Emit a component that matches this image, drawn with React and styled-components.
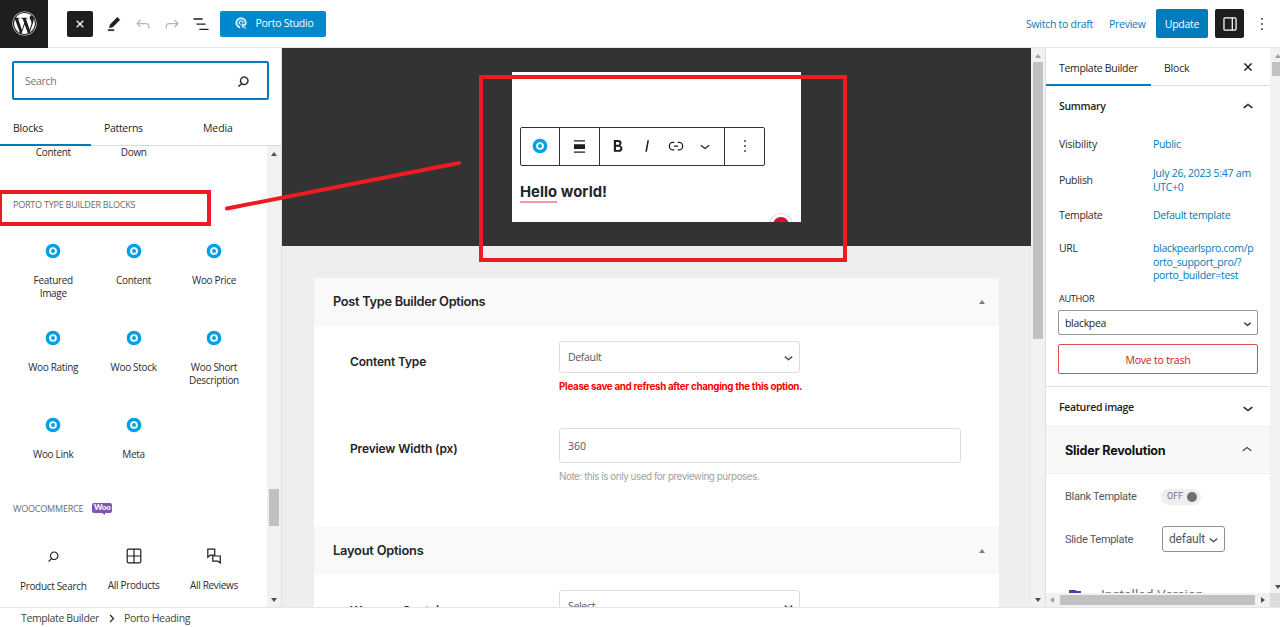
import React from "react";
import styled, { createGlobalStyle, css } from "styled-components";
import { FaWordpress } from "react-icons/fa";

const Global = createGlobalStyle`
  * { box-sizing: border-box; }
  body { margin: 0; overflow: hidden; background: #fff; color: #1e1e1e; letter-spacing: -0.32px;
    font-family: "Open Sans", "Noto Sans", sans-serif; font-size: 10.5px; line-height: 13px; }
`;
const heading = css`
  font-family: Inter, "Liberation Sans", sans-serif;
`;

const Page = styled.div`
  position: relative;
  width: 1280px;
  height: 627px;
  overflow: hidden;
  display: flex;
  flex-direction: column;
`;
const T = styled.span`
  white-space: nowrap;
  letter-spacing: ${(p) => (p.$ls === undefined ? "inherit" : `${p.$ls}px`)};
`;

/* ---------- icons ---------- */
const paths = {
  edit: "m19 7-3-3-8.5 8.5-1 4 4-1L19 7Zm-7 11.5H5V20h7v-1.5Z",
  undo: "M18.3 11.7c-.6-.6-1.4-.9-2.3-.9H6.7l2.9-3.3-1.1-1-4.5 5L8.5 16l1-1-2.7-2.7H16c.5 0 .9.2 1.3.5 1 1 1 3.4 1 4.5v.3h1.5v-.2c0-1.5 0-4.3-1.5-5.7z",
  redo: "M15.6 6.5l-1.1 1 2.9 3.3H8c-.9 0-1.7.3-2.3.9-1.4 1.5-1.4 4.2-1.4 5.6v.2h1.5v-.3c0-1.1 0-3.5 1-4.5.3-.3.7-.5 1.3-.5h9.2L14.5 15l1.1 1.1 4.6-4.6-4.6-5z",
  list: "M3 5.1h11V6.8H3V5.1Zm3.5 6.2h11V13h-11v-1.7ZM21 17.6H10v1.7h11V17.6Z",
  close: "M12 13.06l3.712 3.713 1.061-1.06L13.061 12l3.712-3.712-1.06-1.06L12 10.938 8.288 7.227l-1.061 1.06L10.939 12l-3.712 3.712 1.06 1.061L12 13.061z",
  search: "M13 5c-3.3 0-6 2.7-6 6 0 1.4.5 2.7 1.3 3.7l-3.8 3.8 1.1 1.1 3.8-3.8c1 .8 2.3 1.3 3.7 1.3 3.3 0 6-2.7 6-6S16.3 5 13 5zm0 10.5c-2.5 0-4.5-2-4.5-4.5s2-4.5 4.5-4.5 4.5 2 4.5 4.5-2 4.5-4.5 4.5z",
  bold: "M14.7 11.3c1-.6 1.5-1.6 1.5-3 0-2.3-1.3-3.4-4-3.4H7v14h5.8c1.4 0 2.5-.3 3.3-1 .8-.7 1.2-1.7 1.2-2.9.1-1.9-.8-3.1-2.6-3.7zm-5.1-4h2.3c.6 0 1.1.1 1.4.4.3.3.5.7.5 1.2s-.2 1-.5 1.2c-.3.3-.8.4-1.4.4H9.6V7.3zm4.6 9c-.4.3-1 .4-1.7.4H9.6v-3.9h2.9c.7 0 1.3.2 1.7.5.4.3.6.8.6 1.5s-.2 1.2-.6 1.5z",
  italic: "M12.5 5L10 19h1.9l2.5-14z",
  link: "M10 17.389H8.444A5.194 5.194 0 1 1 8.444 7H10v1.5H8.444a3.694 3.694 0 0 0 0 7.389H10v1.5ZM14 7h1.556a5.194 5.194 0 0 1 0 10.39H14v-1.5h1.556a3.694 3.694 0 0 0 0-7.39H14V7Zm-4.5 6h5v-1.5h-5V13Z",
  down: "M17.5 11.6L12 16l-5.5-4.4.9-1.2L12 14l4.5-3.6 1 1.2z",
  up: "M6.5 12.4L12 8l5.5 4.4-.9 1.2L12 10l-4.5 3.6-1-1.2z",
  right: "M10.6 6L9.4 7l4.6 5-4.6 5 1.2 1 5.4-6z",
  more: "M13 19h-2v-2h2v2zm0-6h-2v-2h2v2zm0-6h-2V5h2v2z",
  drawer: "M18 4H6c-1.1 0-2 .9-2 2v12c0 1.1.9 2 2 2h12c1.1 0 2-.9 2-2V6c0-1.1-.9-2-2-2zm-4 14.5H6c-.3 0-.5-.2-.5-.5V6c0-.3.2-.5.5-.5h8v13zm4.5-.5c0 .3-.2.5-.5.5h-2.5v-13H18c.3 0 .5.2.5.5v12z",
  align: "M5 4h14v1.8H5zM5 9h14v6H5zM5 18.2h14V20H5z",
};
const Svg = styled.svg`
  display: block;
  flex: none;
`;
const Icon = ({ name, size = 20, color = "#1e1e1e", bold = 0 }) => (
  <Svg width={size} height={size} viewBox="0 0 24 24" fill={color} stroke={color} strokeWidth={bold}>
    <path d={paths[name]} />
  </Svg>
);
const PortoIcon = () => (
  <Svg width="16" height="16" viewBox="0 0 16 16">
    <circle cx="8" cy="8" r="5.6" fill="#fff" stroke="#00a1e4" strokeWidth="3.5" />
    <circle cx="8" cy="8" r="2" fill="#00a1e4" />
  </Svg>
);
const StudioIcon = () => (
  <Svg width="13" height="13" viewBox="0 0 13 13" fill="none" stroke="#d5ecf8">
    <path d="M5.2 10.4A4.6 4.6 0 1 1 10 8.2" strokeWidth="2" />
    <path d="M5.8 7.6A1.9 1.9 0 1 1 8 6.2" strokeWidth="1.2" />
    <path d="M6.3 6.3l4.5 1.8-1.7.8 1.9 2.3-1 .8-1.8-2.3-.8 1.6z" fill="#d5ecf8" stroke="none" />
  </Svg>
);
const GridIcon = () => (
  <Svg width="16" height="16" viewBox="0 0 16 16" fill="none" stroke="#1e1e1e" strokeWidth="1.2">
    <rect x="1.2" y="1.2" width="13.6" height="13.6" rx="1.2" />
    <path d="M8 1v14M1 8h14" />
  </Svg>
);
const ReviewsIcon = () => (
  <Svg width="16" height="16" viewBox="0 0 16 16" fill="none" stroke="#1e1e1e" strokeWidth="1.2">
    <path d="M1.8 1.2h7v6H4.2L1.8 9.2z" />
    <path d="M6.8 8h7.5v7l-2.4-1.8H6.8z" fill="#fff" />
  </Svg>
);

/* ---------- header ---------- */
const Header = styled.header`
  height: 48px;
  flex: none;
  display: flex;
  align-items: center;
  border-bottom: 1px solid #e4e4e4;
`;
const Logo = styled.div`
  width: 48px;
  height: 48px;
  background: #1e1e1e;
  color: #fff;
  display: grid;
  place-items: center;
`;
const DarkButton = styled.div`
  width: ${(p) => p.$w}px;
  height: ${(p) => p.$h}px;
  background: #1e1e1e;
  border-radius: 2px;
  display: grid;
  place-items: center;
`;
const CloseButton = styled(DarkButton)`
  margin-left: 19px;
`;
const DrawerButton = styled(DarkButton)`
  margin-left: 7px;
`;
const MoreSlot = styled.div`
  width: 36px;
  padding-left: 8px;
`;
const Tools = styled.div`
  display: flex;
  align-items: center;
  gap: 9px;
  margin: 0 9px 0 11px;
`;
const Primary = styled.div`
  width: ${(p) => p.$w}px;
  height: ${(p) => p.$h}px;
  background: ${(p) => p.$bg};
  color: #fff;
  border-radius: 2px;
  padding-top: 1px;
  display: flex;
  align-items: center;
  justify-content: center;
  gap: 7px;
`;
const StudioButton = styled(Primary)`
  padding: 0 0 1px 3px;
`;
const HeaderRight = styled.div`
  margin-left: auto;
  display: flex;
  align-items: center;
  color: #007cba;
`;
const HeaderLink = styled(T)`
  width: ${(p) => p.$w}px;
  padding-top: 2px;
`;

/* ---------- body ---------- */
const Body = styled.div`
  height: 560px;
  display: flex;
  overflow: hidden;
  border-bottom: 1px solid #e6e6e6;
`;
const Inserter = styled.aside`
  width: 282px;
  flex: none;
  border-right: 1px solid #e0e0e0;
  display: flex;
  flex-direction: column;
`;
const Search = styled.div`
  margin: 13px 12px 0;
  width: 257px;
  height: 39px;
  border: 2px solid #007cba;
  border-radius: 2px;
  color: #757575;
  padding: 1px 15px 0 11px;
  display: flex;
  flex: none;
  align-items: center;
  justify-content: space-between;
`;
const Tabs = styled.div`
  display: flex;
  flex: none;
  height: ${(p) => p.$h}px;
  border-bottom: 1px solid #ddd;
`;
const Tab = styled.div`
  width: ${(p) => p.$w}px;
  height: ${(p) => p.$h}px;
  padding: ${(p) => p.$pt}px 0 0 13px;
  border-bottom: ${(p) => (p.$active ? "2px solid #007cba" : "0")};
`;
const Scroller = styled.div`
  flex: 1;
  min-height: 0;
  display: flex;
`;
const List = styled.div`
  width: 267px;
  overflow: hidden;
  padding-left: 13px;
  font-size: 10px;
`;
const CutRow = styled.div`
  display: grid;
  grid-template-columns: repeat(3, 80.5px);
  text-align: center;
  height: 44px;
  color: #2c2c2c;
`;
const GroupTitle = styled.div`
  display: flex;
  align-items: center;
  gap: 9px;
  height: ${(p) => p.$h}px;
  padding-bottom: ${(p) => p.$pb}px;
  color: #6a6a6a;
  font-size: 9.1px;
  font-weight: 500;
`;
const BlockGrid = styled.div`
  display: grid;
  grid-template-columns: repeat(3, 80.4px);
  grid-auto-rows: 87px;
`;
const Block = styled.div`
  display: flex;
  flex-direction: column;
  align-items: center;
  text-align: center;
  padding: 15px 10px 0;
  gap: 15px;
  color: #2c2c2c;
`;
const WooBadge = styled.span`
  position: relative;
  background: #7f54b3;
  color: #fff;
  width: 20px;
  height: 10px;
  border-radius: 2px;
  font: 900 8px/9px Lato, sans-serif;
  letter-spacing: -0.2px;
  text-align: center;
  &::after {
    content: "";
    position: absolute;
    left: 10px;
    top: 10px;
    border-left: 3px solid transparent;
    border-top: 2px solid #7f54b3;
  }
`;

/* ---------- scrollbars ---------- */
const Bar = styled.div`
  flex: none;
  width: ${(p) => p.$w}px;
  background: #f1f1f1;
  display: flex;
  flex-direction: column;
  align-items: center;
  padding: 6px 0 0;
  overflow: hidden;
`;
const CanvasBar = styled(Bar)`
  border-right: 1px solid #e0e0e0;
`;
const OuterBar = styled(Bar)`
  padding-left: 2px;
  align-items: flex-start;
  > i { margin-left: 3px; }
`;
const Corner = styled.div`
  flex: none;
  width: 10px;
  height: 14px;
  margin: 4px 0 0 -2px;
  background: #dcdcdc;
`;
const Arrow = styled.i`
  flex: none;
  border: 3px solid transparent;
  ${(p) => p.$dir === "up" && css`border-bottom: 4px solid ${p.$c || "#505050"}; border-top: 0;`}
  ${(p) => p.$dir === "down" && css`border-top: 4px solid ${p.$c || "#505050"}; border-bottom: 0;`}
  ${(p) => p.$dir === "left" && css`border-right: 4px solid ${p.$c || "#505050"}; border-left: 0;`}
  ${(p) => p.$dir === "right" && css`border-left: 4px solid ${p.$c || "#505050"}; border-right: 0;`}
`;
const Thumb = styled.div`
  flex: none;
  width: ${(p) => p.$w}px;
  height: ${(p) => p.$h}px;
  margin: ${(p) => p.$m};
  background: #c1c1c1;
`;

/* ---------- canvas ---------- */
const Canvas = styled.main`
  width: 749px;
  flex: none;
  background: #eee;
  overflow: hidden;
`;
const Stage = styled.div`
  height: 198px;
  background: #333;
  padding: 24px 0 0 230px;
`;
const Paper = styled.div`
  width: 289px;
  height: 150px;
  background: #fff;
  padding: 55px 8px 0;
  overflow: hidden;
  position: relative;
`;
const Toolbar = styled.div`
  width: 245px;
  height: 39px;
  border: 1px solid #333;
  border-radius: 2px;
  display: flex;
`;
const ToolGroup = styled.div`
  width: ${(p) => p.$w}px;
  display: flex;
  align-items: center;
  justify-content: center;
  gap: 9px;
  padding-bottom: 1px;
  border-right: ${(p) => (p.$last ? 0 : "1px solid #333")};
`;
const Hello = styled.h2`
  ${heading}
  margin: 16px 0 0;
  font-size: 14.8px;
  line-height: 20px;
  font-weight: 700;
  color: #222529;
  letter-spacing: 0.05px;
  white-space: nowrap;
  u {
    display: inline-block;
    height: 21px;
    text-decoration: none;
    border-bottom: 2px solid #fb93a6;
  }
`;
const Dot = styled.div`
  position: absolute;
  left: 258px;
  top: 142px;
  width: 22px;
  height: 22px;
  border-radius: 50%;
  background: #d2122e;
  border: 3px solid #fff;
  box-shadow: 0 0 0 1px #d9dbe6;
`;
const Metabox = styled.section`
  width: 685px;
  margin-left: 32px;
  margin-top: ${(p) => p.$mt || 0}px;
  background: #fff;
`;
const MetaHead = styled.div`
  ${heading}
  height: 48px;
  background: #f9f9f9;
  display: flex;
  align-items: center;
  justify-content: space-between;
  padding: ${(p) => (p.$low ? "1px 14px 0" : "0 14px 1px")} 19px;
  font-size: 12.8px;
  font-weight: 600;
  color: #222529;
`;
const MetaBody = styled.div`
  height: ${(p) => p.$h}px;
  padding: ${(p) => p.$pt || 15}px 0 0 36px;
`;
const Field = styled.div`
  display: grid;
  grid-template-columns: 209px 402px;
  height: 87px;
  > label {
    ${heading}
    padding-top: 13px;
    font-size: 12px;
    font-weight: 600;
    color: #222529;
    line-height: 16px;
  }
`;
const Input = styled.div`
  width: ${(p) => p.$w}px;
  height: ${(p) => p.$h}px;
  border: 1px solid #ddd;
  border-radius: 3px;
  padding: 1px 2px 0 8px;
  color: #50575e;
  display: flex;
  align-items: center;
  justify-content: space-between;
`;
const Hint = styled.div`
  ${heading}
  padding-top: 7px;
  font-size: 9.8px;
  line-height: 14px;
  white-space: nowrap;
  color: ${(p) => (p.$warn ? "#f00" : "#a0a0a0")};
  font-weight: ${(p) => (p.$warn ? 700 : 400)};
  letter-spacing: ${(p) => p.$ls}px;
`;

/* ---------- settings sidebar ---------- */
const Side = styled.aside`
  width: 224px;
  flex: none;
  display: flex;
  flex-direction: column;
`;
const SideContent = styled.div`
  height: 546px;
  overflow: hidden;
`;
const SideTabs = styled(Tabs)`
  padding-right: 12px;
  > svg { margin: 9px 0 0 auto; }
`;
const PanelHead = styled.div`
  display: flex;
  align-items: center;
  justify-content: space-between;
  height: ${(p) => p.$h}px;
  padding: ${(p) => (p.$line ? 2 : 1)}px 12px 0 13px;
  border-top: ${(p) => (p.$line ? "1px solid #e0e0e0" : 0)};
  font-weight: 600;
`;
const Info = styled.div`
  display: grid;
  grid-template-columns: 94px 1fr;
  align-items: center;
  height: ${(p) => p.$h}px;
  padding-left: 13px;
  line-height: 13.7px;
  color: #2c2c2c;
  > :last-child { color: #007cba; }
`;
const UrlInfo = styled(Info)`
  align-items: start;
  padding-top: 8px;
`;
const AuthorLabel = styled.div`
  margin-left: 13px;
  padding-top: 1px;
  font-size: 9.2px;
  line-height: 12px;
  font-weight: 500;
`;
const AuthorSelect = styled.div`
  margin: 5px 12px 0 12px;
  height: 25px;
  border: 1px solid #949494;
  border-radius: 2px;
  padding: 1px 2px 0 6px;
  display: flex;
  align-items: center;
  justify-content: space-between;
`;
const Trash = styled.div`
  margin: 9px 12px 12px 12px;
  height: 30px;
  padding-top: 2px;
  border: 1px solid #d94f4f;
  border-radius: 2px;
  color: #cc1818;
  display: grid;
  place-items: center;
`;
const SliderHead = styled.div`
  ${heading}
  height: 48px;
  background: #f8f8f8;
  border-top: 1px solid #eee;
  border-bottom: 1px solid #eee;
  padding: 0 13px 0 19px;
  display: flex;
  align-items: center;
  justify-content: space-between;
  font-size: 12.6px;
  font-weight: 700;
  color: #111;
`;
const SlideRow = styled.div`
  height: ${(p) => p.$h}px;
  padding-left: 19px;
  display: grid;
  grid-template-columns: 96px auto;
  align-items: center;
  justify-content: start;
  font-family: Roboto, sans-serif;
  font-size: 11px;
  letter-spacing: 0;
  color: #50575e;
`;
const Toggle = styled.div`
  width: 40px;
  height: 16px;
  border-radius: 8px;
  background: #eceeef;
  color: #777;
  font-size: 9px;
  display: flex;
  align-items: center;
  gap: 4px;
  padding-left: 6px;
  &::after {
    content: "";
    width: 10px;
    height: 10px;
    border-radius: 50%;
    background: #6c7073;
  }
`;
const SlideSelect = styled.div`
  width: 63px;
  height: 26px;
  border: 1px solid #8c8f94;
  border-radius: 3px;
  margin-left: 1px;
  padding-left: 6px;
  font-size: 12px;
  letter-spacing: -0.2px;
  display: flex;
  align-items: center;
`;
const Version = styled.div`
  display: flex;
  align-items: flex-start;
  padding: 25px 0 0 23px;
  gap: 20px;
  font: 400 13.6px/20px Roboto, sans-serif;
  letter-spacing: 0.1px;
  color: #6d7175;
`;
const HBar = styled.div`
  height: 14px;
  background: #f1f1f1;
  display: flex;
  align-items: center;
  justify-content: space-between;
  padding: 0 5px 0 4px;
`;

/* ---------- footer and markup ---------- */
const Footer = styled.footer`
  height: 19px;
  padding: 2px 0 0 21px;
  display: flex;
  align-items: center;
  color: #444;
  gap: 5px;
`;
const MarkBox = styled.div`
  position: absolute;
  left: ${(p) => p.$x}px;
  top: ${(p) => p.$y}px;
  width: ${(p) => p.$w}px;
  height: ${(p) => p.$h}px;
  border: 4px solid #ed1c24;
`;
const MarkLine = styled.svg`
  position: absolute;
  left: 219px;
  top: 150px;
`;

const blocks = ["Featured Image", "Content", "Woo Price", "Woo Rating", "Woo Stock", "Woo Short Description", "Woo Link", "Meta"];
const wooBlocks = [
  ["Product Search", <Icon name="search" size={17} />],
  ["All Products", <GridIcon />],
  ["All Reviews", <ReviewsIcon />],
];

export default function App() {
  return (
    <Page>
      <Global />
      <Header>
        <Logo><FaWordpress size={25} /></Logo>
        <CloseButton $w={26} $h={26}><Icon name="close" size={18} color="#fff" bold={0.4} /></CloseButton>
        <Tools>
          <Icon name="edit" bold={0.6} />
          <Icon name="undo" color="#b5b5b5" />
          <Icon name="redo" color="#b5b5b5" />
          <Icon name="list" />
        </Tools>
        <StudioButton $w={106} $h={26} $bg="#0088cc"><StudioIcon /><T $ls={-0.25}>Porto Studio</T></StudioButton>
        <HeaderRight>
          <HeaderLink $w={83} $ls={-0.27}>Switch to draft</HeaderLink>
          <HeaderLink $w={47} $ls={-0.27}>Preview</HeaderLink>
          <Primary $w={52} $h={29} $bg="#007cba"><T $ls={-0.27}>Update</T></Primary>
          <DrawerButton $w={29} $h={29}><Icon name="drawer" color="#fff" size={20} /></DrawerButton>
          <MoreSlot><Icon name="more" /></MoreSlot>
        </HeaderRight>
      </Header>

      <Body>
        <Inserter>
          <Search><T>Search</T><Icon name="search" size={17} bold={0.4} /></Search>
          <Tabs $h={46}>
            <Tab $w={91} $h={46} $pt={22} $active><T $ls={-0.2}>Blocks</T></Tab>
            <Tab $w={99} $h={46} $pt={22}><T>Patterns</T></Tab>
            <Tab $w={90} $h={46} $pt={22}><T $ls={-0.1}>Media</T></Tab>
          </Tabs>
          <Scroller>
            <List>
              <CutRow><T>Content</T><T>Down</T></CutRow>
              <GroupTitle $h={38} $pb={9}><T $ls={-0.27}>PORTO TYPE BUILDER BLOCKS</T></GroupTitle>
              <BlockGrid>
                {blocks.map((b) => (
                  <Block key={b}><PortoIcon />{b}</Block>
                ))}
              </BlockGrid>
              <GroupTitle $h={44} $pb={6}><T $ls={-0.25}>WOOCOMMERCE</T><WooBadge>Woo</WooBadge></GroupTitle>
              <BlockGrid>
                {wooBlocks.map(([n, icon]) => (
                  <Block key={n}>{icon}<T>{n}</T></Block>
                ))}
              </BlockGrid>
            </List>
            <Bar $w={14}>
              <Arrow $dir="up" />
              <Thumb $w={10} $h={37} $m="333px 0 72px" />
              <Arrow $dir="down" />
            </Bar>
          </Scroller>
        </Inserter>

        <Canvas>
          <Stage>
            <Paper>
              <Toolbar>
                <ToolGroup $w={39}><PortoIcon /></ToolGroup>
                <ToolGroup $w={40}><Icon name="align" size={19} /></ToolGroup>
                <ToolGroup $w={126}><Icon name="bold" /><Icon name="italic" /><Icon name="link" /><Icon name="down" /></ToolGroup>
                <ToolGroup $w={39} $last><Icon name="more" /></ToolGroup>
              </Toolbar>
              <Hello><u>Hello</u> world!</Hello>
              <Dot />
            </Paper>
          </Stage>
          <Metabox $mt={32}>
            <MetaHead><T $ls={-0.3}>Post Type Builder Options</T><Arrow $dir="up" $c="#787c82" /></MetaHead>
            <MetaBody $h={200}>
              <Field>
                <label><T $ls={-0.17}>Content Type</T></label>
                <div>
                  <Input $w={241} $h={32}><T>Default</T><Icon name="down" size={17} bold={0.6} color="#444" /></Input>
                  <Hint $warn $ls={-0.31}>Please save and refresh after changing the this option.</Hint>
                </div>
              </Field>
              <Field>
                <label><T $ls={-0.14}>Preview Width (px)</T></label>
                <div>
                  <Input $w={402} $h={35}><T $ls={0}>360</T></Input>
                  <Hint $ls={-0.42}>Note: this is only used for previewing purposes.</Hint>
                </div>
              </Field>
            </MetaBody>
          </Metabox>
          <Metabox>
            <MetaHead $low><T $ls={-0.2}>Layout Options</T><Arrow $dir="up" $c="#787c82" /></MetaHead>
            <MetaBody $h={100} $pt={16}>
              <Field>
                <label><T $ls={-0.15}>Wrapper Container</T></label>
                <Input $w={241} $h={32}><T>Select</T><Icon name="down" size={17} bold={0.6} color="#444" /></Input>
              </Field>
            </MetaBody>
          </Metabox>
        </Canvas>
        <CanvasBar $w={15}>
          <Arrow $dir="up" $c="#a0a0a0" />
          <Thumb $w={10} $h={277} $m="4px 0 259px" />
          <Arrow $dir="down" />
        </CanvasBar>

        <Side>
          <SideContent>
            <SideTabs $h={38}>
              <Tab $w={105} $h={38} $pt={14} $active><T>Template Builder</T></Tab>
              <Tab $w={60} $h={38} $pt={14}><T $ls={-0.2}>Block</T></Tab>
              <Icon name="close" bold={0.2} />
            </SideTabs>
            <PanelHead $h={40}><T>Summary</T><Icon name="up" bold={0.4} /></PanelHead>
            <Info $h={38}><T $ls={-0.2}>Visibility</T><T>Public</T></Info>
            <Info $h={33}><T>Publish</T><div><T $ls={-0.25}>July 26, 2023 5:47 am</T><br /><T>UTC+0</T></div></Info>
            <Info $h={37}><T>Template</T><T>Default template</T></Info>
            <UrlInfo $h={58}><T>URL</T><div><T>blackpearlspro.com/p</T><br /><T>orto_support_pro/?</T><br /><T>porto_builder=test</T></div></UrlInfo>
            <AuthorLabel><T>AUTHOR</T></AuthorLabel>
            <AuthorSelect><T>blackpea</T><Icon name="down" size={15} bold={0.6} /></AuthorSelect>
            <Trash><T $ls={-0.2}>Move to trash</T></Trash>
            <PanelHead $h={40} $line><T>Featured image</T><Icon name="down" bold={0.4} /></PanelHead>
            <SliderHead><T $ls={-0.2}>Slider Revolution</T><Icon name="up" color="#444" /></SliderHead>
            <SlideRow $h={45}><T $ls={-0.27}>Blank Template</T><Toggle>OFF</Toggle></SlideRow>
            <SlideRow $h={40}><T $ls={-0.3}>Slide Template</T><SlideSelect><T>default</T><Icon name="down" size={17} bold={0.4} color="#444" /></SlideSelect></SlideRow>
            <Version>
              <Svg width="12" height="12" viewBox="0 0 12 12" fill="#5e35b1"><path d="M0 6h6l2 1h4v5H0z" /></Svg>
              <T>Installed Version</T>
            </Version>
          </SideContent>
          <HBar>
            <Arrow $dir="left" $c="#a0a0a0" />
            <Thumb $w={195} $h={10} $m="0" />
            <Arrow $dir="right" />
          </HBar>
        </Side>
        <OuterBar $w={10}>
          <Arrow $dir="up" $c="#a0a0a0" />
          <Thumb $w={10} $h={14} $m="4px 0 509px" />
          <Arrow $dir="down" />
          <Corner />
        </OuterBar>
      </Body>

      <Footer>
        <T $ls={-0.37}>Template Builder</T>
        <Icon name="right" size={15} bold={0.6} />
        <T>Porto Heading</T>
      </Footer>

      <MarkBox $x={-2} $y={190} $w={213} $h={36} />
      <MarkBox $x={479} $y={75} $w={368} $h={187} />
      <MarkLine width="250" height="70" viewBox="0 0 250 70">
        <path d="M8 58.5L240 13" stroke="#ed1c24" strokeWidth="4" strokeLinecap="round" />
      </MarkLine>
    </Page>
  );
}
